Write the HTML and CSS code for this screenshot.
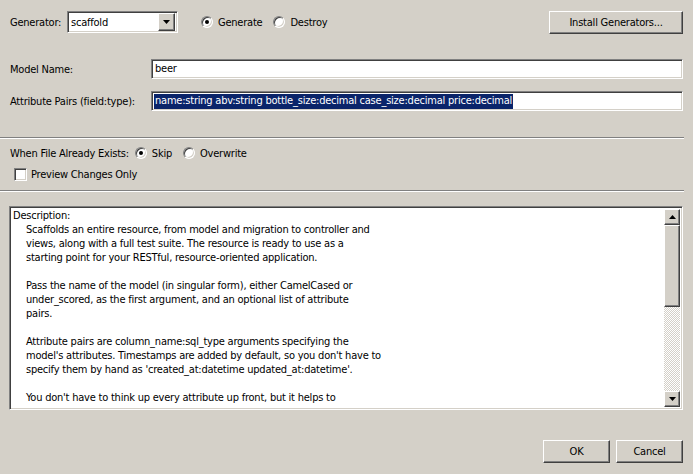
FILE: index.html
```html
<!DOCTYPE html>
<html>
<head>
<meta charset="utf-8">
<link rel="stylesheet" href="styles.css">
</head>
<body>
<div class="dialog">
  <div class="row-top">
    <span class="label gen-label">Generator:</span>
    <div class="combo sunken">
      <span class="combo-text">scaffold</span>
      <span class="combo-btn raised">
        <svg width="7" height="4" viewBox="0 0 7 4"><polygon points="0,0 7,0 3.5,4" fill="#000"/></svg>
      </span>
    </div>
    <div class="radio-group gen-radios">
      <span class="radio checked"></span><span class="radio-label">Generate</span>
      <span class="radio"></span><span class="radio-label">Destroy</span>
    </div>
    <button class="btn raised install">Install Generators...</button>
  </div>

  <div class="field-row model-row">
    <span class="label field-label">Model Name:</span>
    <div class="field sunken"><span class="field-text">beer</span></div>
  </div>
  <div class="field-row attr-row">
    <span class="label field-label">Attribute Pairs (field:type):</span>
    <div class="field sunken"><span class="field-text selected">name:string abv:string bottle_size:decimal case_size:decimal price:decimal</span></div>
  </div>

  <div class="separator sep1"></div>

  <div class="exists-row">
    <span class="label exists-label">When File Already Exists:</span>
    <span class="radio checked"></span><span class="radio-label">Skip</span>
    <span class="radio"></span><span class="radio-label">Overwrite</span>
  </div>
  <div class="check-row">
    <span class="checkbox sunken"></span><span class="check-label">Preview Changes Only</span>
  </div>

  <div class="separator sep2"></div>

  <div class="textarea sunken">
    <div class="text-content">
      <div class="line">Description:</div>
      <div class="line ind">Scaffolds an entire resource, from model and migration to controller and</div>
      <div class="line ind">views, along with a full test suite. The resource is ready to use as a</div>
      <div class="line ind">starting point for your RESTful, resource-oriented application.</div>
      <div class="line ind">&nbsp;</div>
      <div class="line ind">Pass the name of the model (in singular form), either CamelCased or</div>
      <div class="line ind">under_scored, as the first argument, and an optional list of attribute</div>
      <div class="line ind">pairs.</div>
      <div class="line ind">&nbsp;</div>
      <div class="line ind">Attribute pairs are column_name:sql_type arguments specifying the</div>
      <div class="line ind">model's attributes. Timestamps are added by default, so you don't have to</div>
      <div class="line ind">specify them by hand as 'created_at:datetime updated_at:datetime'.</div>
      <div class="line ind">&nbsp;</div>
      <div class="line ind">You don't have to think up every attribute up front, but it helps to</div>
      <div class="line ind">sketch out a few so you can start working with the resource immediately.</div>
    </div>
    <div class="scrollbar">
      <span class="sb-btn raised">
        <svg width="7" height="4" viewBox="0 0 7 4"><polygon points="3.5,0 7,4 0,4" fill="#000"/></svg>
      </span>
      <span class="sb-thumb raised"></span>
      <span class="sb-track"></span>
      <span class="sb-btn raised">
        <svg width="7" height="4" viewBox="0 0 7 4"><polygon points="0,0 7,0 3.5,4" fill="#000"/></svg>
      </span>
    </div>
  </div>

  <div class="button-row">
    <button class="btn raised ok">OK</button>
    <button class="btn raised cancel">Cancel</button>
  </div>
</div>
</body>
</html>
```
FILE: styles.css
```css
html, body {
  margin: 0;
  padding: 0;
  background: #d4d0c8;
}
body {
  width: 693px;
  height: 474px;
  overflow: hidden;
  font-family: "DejaVu Sans Condensed", "DejaVu Sans", sans-serif;
  font-stretch: condensed;
  font-size: 11px;
  letter-spacing: -0.22px;
  color: #000;
}
.dialog {
  padding-top: 11px;
}
.raised {
  box-sizing: border-box;
  background: #d4d0c8;
  border: 1px solid;
  border-color: #ffffff #404040 #404040 #ffffff;
  box-shadow: inset -1px -1px #808080;
}
.sunken {
  box-sizing: border-box;
  background: #fff;
  border: 1px solid;
  border-color: #808080 #ffffff #ffffff #808080;
  box-shadow: inset 1px 1px #404040, inset -1px -1px #d4d0c8;
}
.label {
  white-space: nowrap;
}

/* top row */
.row-top {
  display: flex;
  align-items: center;
  height: 22px;
  padding-left: 10px;
  padding-right: 10px;
}
.gen-label {
  width: 57px;
}
.combo {
  width: 111px;
  height: 22px;
  display: flex;
  align-items: center;
  padding: 2px;
}
.combo-text {
  flex: 1;
  padding-left: 1px;
}
.combo-btn {
  width: 17px;
  height: 18px;
  display: flex;
  align-items: center;
  justify-content: center;
}
.radio-group {
  display: flex;
  align-items: center;
}
.gen-radios {
  margin-left: 23px;
}
.radio {
  position: relative;
  box-sizing: border-box;
  width: 12px;
  height: 12px;
  border-radius: 50%;
  background: #fff;
  border: 1px solid;
  border-color: #808080 #ffffff #ffffff #808080;
  box-shadow: inset 1px 1px #404040, inset -1px -1px #d4d0c8;
  flex: none;
}
.radio.checked::after {
  content: "";
  position: absolute;
  left: 3px;
  top: 3px;
  width: 4px;
  height: 4px;
  border-radius: 50%;
  background: #000;
}
.radio-label {
  margin-left: 5px;
  margin-right: 11px;
}
.btn {
  font-family: inherit;
  font-stretch: condensed;
  font-size: 11px;
  letter-spacing: -0.22px;
  color: #000;
  padding: 0;
  height: 23px;
}
.install {
  margin-left: auto;
  width: 134px;
  height: 23px;
}

/* fields */
.field-row {
  display: flex;
  align-items: center;
  padding-left: 10px;
  padding-right: 10px;
  height: 20px;
}
.model-row {
  margin-top: 26px;
}
.attr-row {
  margin-top: 12px;
}
.field-label {
  width: 141px;
}
.field {
  flex: 1;
  height: 20px;
  display: flex;
  align-items: center;
  padding: 2px;
  overflow: hidden;
}
.field-text {
  padding-left: 1px;
  white-space: nowrap;
  line-height: 14px;
}
.field-text.selected {
  padding: 0 1px 1px 1px;
  background: #0a246a;
  color: #fff;
}

.separator {
  border-top: 1px solid #808080;
  border-bottom: 1px solid #ffffff;
  height: 0;
  margin-right: 9px;
}
.sep1 {
  margin-top: 26px;
}
.sep2 {
  margin-top: 9px;
}

.exists-row {
  display: flex;
  align-items: center;
  height: 16px;
  margin-top: 6px;
  padding-left: 10px;
}
.exists-label {
  margin-right: 6px;
}
.check-row {
  display: flex;
  align-items: center;
  height: 13px;
  margin-top: 7px;
  padding-left: 14px;
}
.checkbox {
  width: 13px;
  height: 13px;
  flex: none;
}
.check-label {
  margin-left: 4px;
}

/* textarea */
.textarea {
  margin-top: 14px;
  margin-left: 9px;
  width: 674px;
  height: 204px;
  display: flex;
  padding: 2px;
}
.text-content {
  flex: 1;
  overflow: hidden;
  padding-left: 1px;
}
.line {
  line-height: 14px;
  white-space: nowrap;
}
.line.ind {
  padding-left: 13px;
}
.scrollbar {
  width: 16px;
  display: flex;
  flex-direction: column;
}
.sb-btn {
  width: 16px;
  height: 16px;
  display: flex;
  align-items: center;
  justify-content: center;
  flex: none;
}
.sb-thumb {
  width: 16px;
  height: 82px;
  flex: none;
}
.sb-track {
  flex: 1;
  background: repeating-conic-gradient(#ffffff 0 25%, #d4d0c8 0 50%) 0 0 / 2px 2px;
}

.button-row {
  display: flex;
  justify-content: flex-end;
  gap: 6px;
  margin-top: 30px;
  padding-right: 10px;
}
.ok, .cancel {
  width: 67px;
}
```
